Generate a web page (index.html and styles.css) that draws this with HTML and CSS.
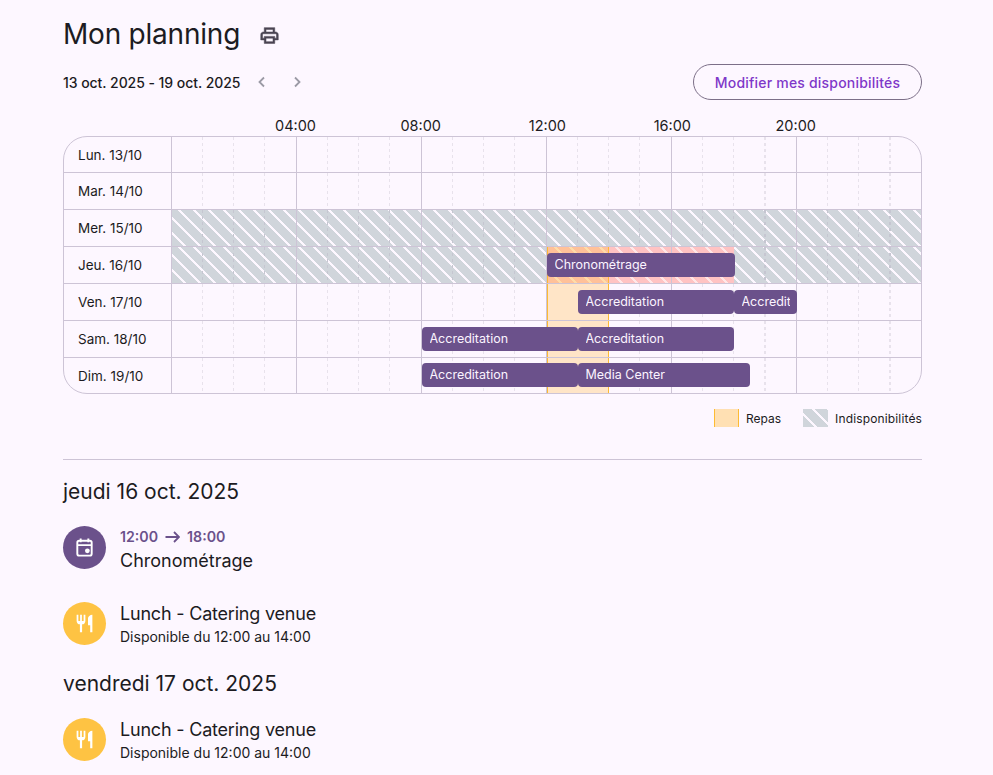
FILE: index.html
```html
<!DOCTYPE html>
<html lang="fr">
<head>
<meta charset="utf-8">
<title>Mon planning</title>
<link rel="stylesheet" href="styles.css">
</head>
<body>
<main class="page">
  <header class="title-row">
    <h1>Mon planning</h1>
    <svg class="print" viewBox="0 0 24 24"><path d="M19 8C20.66 8 22 9.34 22 11V17H18V21H6V17H2V11C2 9.34 3.34 8 5 8H6V3H18V8H19M8 5V8H16V5H8M16 19V15H8V19H16M18 15H20V11C20 10.45 19.55 10 19 10H5C4.45 10 4 10.45 4 11V15H6V13H18V15Z"/></svg>
  </header>
  <div class="range-row">
    <div class="range">
      <span class="range-text">13 oct. 2025 - 19 oct. 2025</span>
      <svg class="chev" viewBox="0 0 16 16"><path d="M10 3.5 5.5 8l4.5 4.5"/></svg>
      <svg class="chev" viewBox="0 0 16 16"><path d="M6 3.5 10.5 8 6 12.5"/></svg>
    </div>
    <button class="edit">Modifier mes disponibilités</button>
  </div>
  <div class="axis">
    <span class="tick">04:00</span><span class="tick">08:00</span><span class="tick">12:00</span><span class="tick">16:00</span><span class="tick">20:00</span>
  </div>
  <section class="grid">
    <div class="row"><div class="day">Lun. 13/10</div><div class="track"></div></div>
    <div class="row"><div class="day">Mar. 14/10</div><div class="track"></div></div>
    <div class="row"><div class="day">Mer. 15/10</div><div class="track off"></div></div>
    <div class="row"><div class="day">Jeu. 16/10</div><div class="track off">
      <i class="conflict meal-conflict" style="left:375px;width:62px"></i>
      <i class="conflict busy-conflict" style="left:437px;width:125px"></i>
      <div class="bar" style="left:375px;width:188px"><span class="bar-label">Chronométrage</span></div>
    </div></div>
    <div class="row"><div class="day">Ven. 17/10</div><div class="track">
      <i class="meal"></i>
      <div class="bar" style="left:406px;width:156px"><span class="bar-label">Accreditation</span></div>
      <div class="bar short" style="left:562px;width:63px"><span class="bar-label">Accreditation</span></div>
    </div></div>
    <div class="row"><div class="day">Sam. 18/10</div><div class="track">
      <i class="meal"></i>
      <div class="bar" style="left:250px;width:156px"><span class="bar-label">Accreditation</span></div>
      <div class="bar" style="left:406px;width:156px"><span class="bar-label">Accreditation</span></div>
    </div></div>
    <div class="row"><div class="day">Dim. 19/10</div><div class="track">
      <i class="meal"></i>
      <div class="bar" style="left:250px;width:156px"><span class="bar-label">Accreditation</span></div>
      <div class="bar" style="left:406px;width:172px"><span class="bar-label">Media Center</span></div>
    </div></div>
  </section>
  <div class="legend">
    <span class="swatch swatch-meal"></span><span class="legend-label">Repas</span>
    <span class="swatch swatch-off"></span><span class="legend-label indispo">Indisponibilités</span>
  </div>
  <hr class="divider">
  <h2 class="date first">jeudi 16 oct. 2025</h2>
  <article class="item shift">
    <span class="badge purple"><svg viewBox="0 0 24 24" class="cal"><rect x="4.5" y="5" width="15" height="15.5" rx="2"/><path d="M8 2.5v4M16 2.5v4M4.5 9.5h15"/><circle cx="15" cy="15.5" r="2.5" class="dot"/></svg></span>
    <div class="copy">
      <div class="time"><span>12:00</span><svg class="arrow" viewBox="0 0 15 12"><path d="M0.5 6H14M9 1l5 5-5 5"/></svg><span>18:00</span></div>
      <div class="name">Chronométrage</div>
    </div>
  </article>
  <article class="item lunch">
    <span class="badge yellow"><svg viewBox="0 0 24 24" class="cut"><path d="M11 9H9V2H7V9H5V2H3V9C3 11.12 4.66 12.84 6.75 12.97V22H9.25V12.97C11.34 12.84 13 11.12 13 9V2H11V9M16 6V14H18.5V22H21V2C18.24 2 16 4.24 16 6Z"/></svg></span>
    <div class="copy">
      <div class="name tight">Lunch - Catering venue</div>
      <div class="sub">Disponible du 12:00 au 14:00</div>
    </div>
  </article>
  <h2 class="date">vendredi 17 oct. 2025</h2>
  <article class="item lunch">
    <span class="badge yellow"><svg viewBox="0 0 24 24" class="cut"><path d="M11 9H9V2H7V9H5V2H3V9C3 11.12 4.66 12.84 6.75 12.97V22H9.25V12.97C11.34 12.84 13 11.12 13 9V2H11V9M16 6V14H18.5V22H21V2C18.24 2 16 4.24 16 6Z"/></svg></span>
    <div class="copy">
      <div class="name tight">Lunch - Catering venue</div>
      <div class="sub">Disponible du 12:00 au 14:00</div>
    </div>
  </article>
</main>
</body>
</html>
```
FILE: styles.css
```css
* { box-sizing: border-box; }
html, body { margin: 0; height: 775px; overflow: hidden; }
body {
  background: #fdf7ff;
  color: #1c1b22;
  font-family: "Inter", "Liberation Sans", sans-serif;
}
.page { width: 922px; padding: 14px 0 0 63px; }

.title-row { display: flex; align-items: center; gap: 19px; height: 40px; }
h1 { margin: 0; font-size: 28px; font-weight: 400; letter-spacing: -0.22px; line-height: 40px; }
.print { width: 21px; height: 21px; fill: #4a4553; stroke: #4a4553; stroke-width: 0.6; margin-top: 2px; }

.range-row { display: flex; justify-content: space-between; align-items: center; margin-top: 10px; height: 36px; }
.range { display: flex; align-items: center; }
.range-text { font-size: 14px; font-weight: 450; letter-spacing: -0.05px; width: 177px; white-space: nowrap; }
.chev { width: 16px; height: 16px; fill: none; stroke: #9b9aa5; stroke-width: 1.8; margin-left: 14px; }
.chev + .chev { margin-left: 19px; }
.edit {
  width: 229px; height: 36px; border: 1px solid #7c6f88; border-radius: 18px;
  background: transparent; color: #7f37c9; font: 450 14px "Inter", "Liberation Sans", sans-serif;
  letter-spacing: 0.2px; white-space: nowrap;
}

.axis { display: flex; margin: 15px 0 0 108px; height: 21px; }
.tick { width: 125px; font-size: 14.5px; line-height: 22px; text-align: right; transform: translateX(20px); white-space: nowrap; }

.grid {
  display: grid; grid-template-rows: 36px repeat(5, 37px) 1fr;
  width: 859px; height: 258px;
  border: 1px solid #cdc4d6; border-radius: 24px; overflow: hidden;
}
.row { display: flex; border-bottom: 1px solid #cdc4d6; }
.row:last-child { border-bottom: 0; }
.day { display: flex; align-items: center; width: 108px; flex: none; padding-left: 14px; font-size: 13.5px; border-right: 1px solid #cdc4d6; }
.track { position: relative; flex: 1; }
.track::before {
  content: ""; position: absolute; inset: 0 0 0 30.25px;
  background: repeating-linear-gradient(90deg, #e8e2ec 0 1px, transparent 1px 31.25px);
  -webkit-mask-image: repeating-linear-gradient(180deg, #000 0 3px, transparent 3px 6px);
  mask-image: repeating-linear-gradient(180deg, #000 0 3px, transparent 3px 6px);
}
.track::after {
  content: ""; position: absolute; inset: 0; pointer-events: none;
  background: repeating-linear-gradient(90deg, transparent 0 124px, #cdc4d6 124px 125px);
}
.track.off { background-image: repeating-linear-gradient(45deg, #d0d5db 0 8.2px, #fdf7ff 8.2px 10.6px); }
.track.off::before { background: repeating-linear-gradient(90deg, #c6c6d1 0 1px, transparent 1px 31.25px); }
.meal {
  position: absolute; top: 0; bottom: 0; left: 375px; width: 62px;
  background: #ffe5c7; border: solid #fdbb33; border-width: 0 1px;
}
.conflict { position: absolute; top: 0; bottom: 0; }
.meal-conflict {
  background: repeating-linear-gradient(45deg, #ffc199 0 8.2px, #ffdca8 8.2px 10.6px);
  border: solid #fdbb33; border-width: 0 1px;
}
.busy-conflict { background: repeating-linear-gradient(45deg, #ffc3c3 0 8.2px, #ffe7e7 8.2px 10.6px); }
.bar {
  position: absolute; z-index: 1; top: 6px; height: 24px; padding: 0 8px 0 7.5px;
  background: #6b518b; color: #fbf4ff; border-radius: 4px;
  font-size: 12.5px; line-height: 24px; white-space: nowrap;
}
.bar.short { padding-right: 7px; }
.row:last-child .bar { top: 5px; }
.bar-label { display: block; overflow: hidden; }

.legend { display: flex; justify-content: flex-end; align-items: center; height: 18px; margin-top: 15px; font-size: 12px; }
.swatch { width: 25px; height: 18px; margin-right: 7px; }
.swatch-meal { background: #ffe0b3; border: solid #fdbb33; border-width: 0 1px; }
.swatch-off { background: repeating-linear-gradient(45deg, #d0d5db 0 8.2px, #fdf7ff 8.2px 10.6px); margin-left: 22px; }
.legend-label { white-space: nowrap; }
.indispo { letter-spacing: 0.14px; }

.divider { margin: 32px 0 0; border: 0; border-top: 1px solid #cdc4d6; }
.date { margin: 0; font-size: 21px; font-weight: 400; line-height: 30px; }
.date.first { margin-top: 17px; }
.item { display: flex; align-items: flex-start; gap: 14px; height: 43px; }
.shift { margin-top: 19px; }
.shift .copy { padding-top: 1px; }
.lunch { margin-top: 33px; }
.date + .lunch { margin-top: 19px; }
.item + .date { margin-top: 24px; }
.badge { width: 43px; height: 43px; border-radius: 50%; flex: none; display: flex; align-items: center; justify-content: center; }
.purple { background: #6b518b; }
.yellow { background: #fec343; }
.cal { width: 23px; height: 23px; fill: none; stroke: #fff; stroke-width: 2; }
.cal .dot { fill: #fff; stroke: none; }
.cut { width: 21px; height: 21px; fill: #fff; }
.time { display: flex; align-items: center; gap: 7px; font-size: 14.2px; font-weight: 600; color: #6b518b; line-height: 20px; }
.arrow { width: 15px; height: 12px; fill: none; stroke: #6b518b; stroke-width: 1.8; }
.name { font-size: 18px; line-height: 28px; }
.name.tight { line-height: 24px; letter-spacing: -0.2px; }
.sub { font-size: 14px; line-height: 22px; }
```
